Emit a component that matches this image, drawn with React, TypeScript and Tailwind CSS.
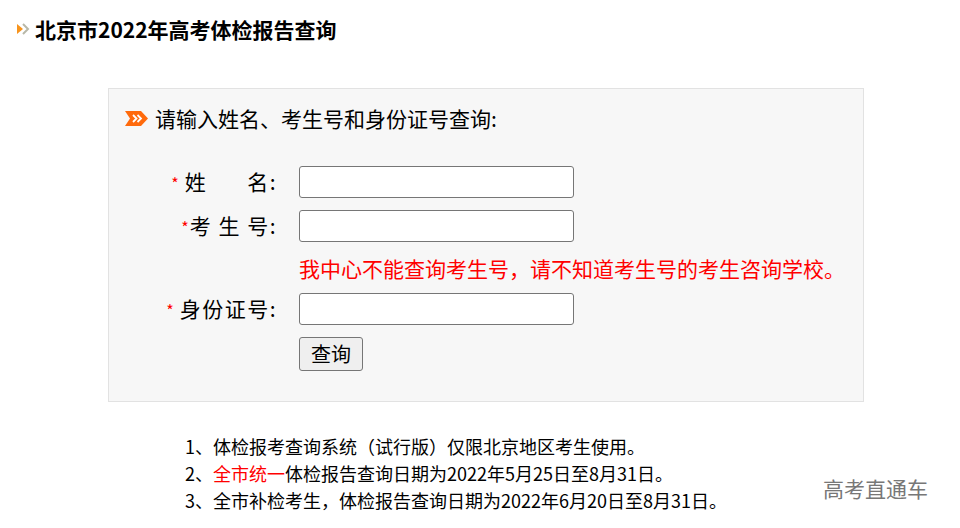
import React from 'react';

function TitleMark() {
  return (
    <svg width="14" height="12" viewBox="0 0 14 12" className="shrink-0">
      <path d="M1 1 L7 6 L1 11 Z" fill="#f7941d" />
      <path d="M7 1 L12 6 L7 11" fill="none" stroke="#b8b8a8" strokeWidth="2" />
    </svg>
  );
}

function ArrowBadge() {
  return (
    <svg width="23" height="15" viewBox="0 0 23 15" className="shrink-0">
      <path d="M0 0 H16 L23 7.5 L16 15 H0 L5 7.5 Z" fill="#ff6a0c" />
      <path d="M8 4 L11.5 7.5 L8 11" fill="none" stroke="#fff" strokeWidth="1.8" />
      <path d="M12.5 4 L16 7.5 L12.5 11" fill="none" stroke="#fff" strokeWidth="1.8" />
    </svg>
  );
}

function Star({ gap = true }: { gap?: boolean }) {
  return <span className={`text-[16px] tracking-normal text-[#ff0000] ${gap ? 'mr-[6px]' : 'mr-[1px]'}`}>*</span>;
}

function Field({ label }: { label: React.ReactNode }) {
  return (
    <div className="flex items-center">
      <div className="w-[168px] text-right text-[21px] leading-[28px] tracking-[1.5px] text-black">{label}</div>
      <input
        type="text"
        className="ml-[22px] h-[32px] w-[275px] rounded-[3px] border border-[#767676] bg-white px-2 outline-none"
      />
    </div>
  );
}

export default function App() {
  return (
    <div className="relative min-h-[528px] w-[960px] bg-white font-['Noto_Sans_CJK_SC',sans-serif] text-black">
      {/* 标题 */}
      <div className="flex items-center gap-[5px] pl-[16px] pt-[14px]">
        <TitleMark />
        <h1 className="text-[21px] font-bold leading-[30px]">北京市2022年高考体检报告查询</h1>
      </div>

      {/* 查询框 */}
      <div className="ml-[108px] mt-[44px] h-[314px] w-[756px] border border-[#e2e2e2] bg-[#f7f7f7]">
        <div className="flex items-center gap-[7px] pl-[16px] pt-[15px]">
          <ArrowBadge />
          <span className="text-[21px] leading-[28px]">请输入姓名、考生号和身份证号查询:</span>
        </div>

        <div className="mt-[34px] flex flex-col">
          <Field
            label={
              <>
                <Star />
                姓<span className="inline-block w-[40px]" />名:
              </>
            }
          />
          <div className="mt-[12px]">
            <Field
              label={
                <>
                  <Star gap={false} />考 生 号:
                </>
              }
            />
          </div>
          <p className="ml-[190px] mt-[12px] text-[21px] leading-[28px] text-[#ff0000]">
            我中心不能查询考生号，请不知道考生号的考生咨询学校。
          </p>
          <div className="mt-[11px]">
            <Field
              label={
                <>
                  <Star />
                  身份证号:
                </>
              }
            />
          </div>
          <div className="ml-[190px] mt-[12px]">
            <button className="h-[34px] w-[64px] rounded-[3px] border border-[#767676] bg-[#efefef] text-[20px] leading-[28px]">
              查询
            </button>
          </div>
        </div>
      </div>

      {/* 说明 */}
      <ul className="ml-[185px] mt-[31px] text-[18px] leading-[27px]">
        <li>1、体检报考查询系统（试行版）仅限北京地区考生使用。</li>
        <li>
          2、<span className="text-[#ff0000]">全市统一</span>体检报告查询日期为2022年5月25日至8月31日。
        </li>
        <li>3、全市补检考生，体检报告查询日期为2022年6月20日至8月31日。</li>
      </ul>

      <div className="absolute left-[823px] top-[474px] text-[21px] leading-[28px] text-[#777]">高考直通车</div>
    </div>
  );
}
